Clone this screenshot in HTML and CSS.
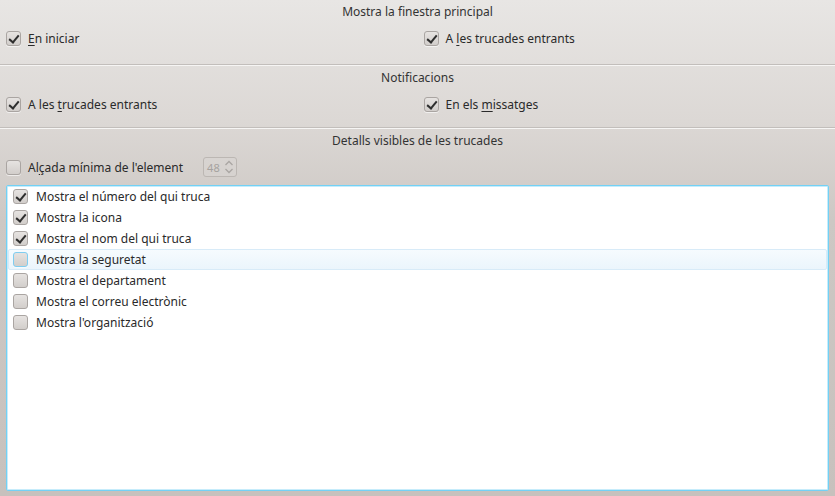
FILE: index.html
```html
<!DOCTYPE html>
<html>
<head>
<meta charset="utf-8">
<link rel="stylesheet" href="styles.css">
</head>
<body>
<div class="window">
  <section class="sec sec1">
    <div class="title">Mostra la finestra principal</div>
    <div class="cols">
      <label class="chk"><span class="box on"></span><span><u>E</u>n iniciar</span></label>
      <label class="chk"><span class="box on"></span><span>A <u>l</u>es trucades entrants</span></label>
    </div>
  </section>
  <div class="sep"></div>
  <section class="sec sec2">
    <div class="title">Notificacions</div>
    <div class="cols">
      <label class="chk"><span class="box on"></span><span>A les <u>t</u>rucades entrants</span></label>
      <label class="chk"><span class="box on"></span><span>En els <u>m</u>issatges</span></label>
    </div>
  </section>
  <div class="sep"></div>
  <section class="sec sec3">
    <div class="title">Detalls visibles de les trucades</div>
    <div class="minrow">
      <label class="chk"><span class="box"></span><span>Al<u>ç</u>ada mínima de l'element</span></label>
      <div class="spin"><span class="val">48</span>
        <svg class="arrows" width="10" height="16" viewBox="0 0 10 16"><path d="M1.5 6 L5 2.5 L8.5 6 M1.5 10 L5 13.5 L8.5 10" fill="none" stroke="#aaa6a3" stroke-width="1.3"/></svg>
      </div>
    </div>
    <div class="list">
      <div class="row"><span class="box on"></span><span>Mostra el número del qui truca</span></div>
      <div class="row"><span class="box on"></span><span>Mostra la icona</span></div>
      <div class="row"><span class="box on"></span><span>Mostra el nom del qui truca</span></div>
      <div class="row hover"><span class="box"></span><span>Mostra la seguretat</span></div>
      <div class="row"><span class="box"></span><span>Mostra el departament</span></div>
      <div class="row"><span class="box"></span><span>Mostra el correu electrònic</span></div>
      <div class="row"><span class="box"></span><span>Mostra l'organització</span></div>
    </div>
  </section>
</div>
</body>
</html>
```
FILE: styles.css
```css
* { box-sizing: border-box; }
html, body { margin: 0; padding: 0; }
body {
  width: 835px; height: 496px; overflow: hidden;
  font-family: "Noto Sans", "Open Sans", sans-serif;
  font-size: 12px; color: #2a2a2a;
  background: linear-gradient(#e8e6e4 0px, #dcd8d5 120px, #cdc8c4 220px, #c7c1bd 496px);
}
.window { display: flex; flex-direction: column; height: 496px; }
.sec { display: flex; flex-direction: column; }
.sec1 { padding-top: 4px; height: 64px; }
.sec1 .cols { margin-top: 8px; }
.sec2 { padding-top: 4px; height: 61px; }
.sec2 .cols { margin-top: 8px; }
.sec3 { padding-top: 4px; flex: 1; padding-bottom: 5px; }
.title { text-align: center; line-height: 16px; height: 16px; color: #333; }
.cols { display: grid; grid-template-columns: 1fr 1fr; }
.chk { display: flex; align-items: center; gap: 7px; padding-left: 6px; height: 20px; }
u { text-decoration: underline; text-underline-offset: 2px; }
.sep { height: 2px; border-top: 1px solid #c2bebb; border-bottom: 1px solid #f6f5f4; }
.box {
  width: 15px; height: 15px; flex: none; border-radius: 3px;
  border: 1px solid #aaa5a2;
  background: linear-gradient(#e6e3e1, #d2cecb);
  box-shadow: 0 1px 0 rgba(255,255,255,0.6);
  position: relative;
}
.box.on::after {
  content: ""; position: absolute; left: 4px; top: 1px;
  width: 4px; height: 8px;
  border-right: 2px solid #2e2e2e; border-bottom: 2px solid #2e2e2e;
  transform: rotate(40deg);
}
.minrow { display: flex; align-items: center; gap: 20px; margin-top: 8px; height: 20px; }
.spin {
  width: 34px; height: 20px; border: 1px solid #bcb7b3; border-radius: 3px;
  background: linear-gradient(#d8d4d1, #d6d2cf);
  display: flex; align-items: center; justify-content: space-between;
  padding: 0 2px 0 3px; color: #a6a29f; font-size: 11px;
}
.arrows { display: block; }
.list {
  margin: 8px 6px 0 6px; flex: 1;
  background: #fff; border: 1px solid #72d1f5; border-radius: 2px;
  box-shadow: inset 0 0 0 1px #c6ecfb;
  padding: 0 1px;
}
.row { display: flex; align-items: center; gap: 8px; height: 21px; padding-left: 4px; border: 1px solid transparent; border-radius: 2px; }
.row.hover { background: linear-gradient(#f6fbfe, #ebf5fc); border-color: #d8ebf8; }
.row.hover .box { border-color: #7fcdf0; }
```
